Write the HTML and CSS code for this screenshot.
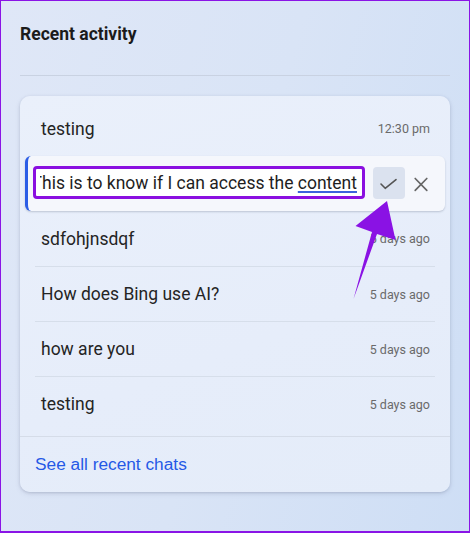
FILE: index.html
```html
<!DOCTYPE html>
<html lang="en">
<head>
<meta charset="utf-8">
<title>Recent activity</title>
<link rel="stylesheet" href="styles.css">
</head>
<body>
<div class="frame">
  <h2 class="title">Recent activity</h2>
  <div class="rule"></div>
  <section class="card">
    <ul class="list">
      <li class="row">
        <span class="name">testing</span>
        <span class="time">12:30 pm</span>
      </li>
      <li class="edit-row">
        <div class="input">
          <div class="clip"><span class="value">This is to know if I can access the <span class="spell">content</span></span></div>
        </div>
        <button class="icon-btn ok" aria-label="Confirm">
          <svg width="32" height="32" viewBox="0 0 32 32"><path d="M8 17 L12.2 21.3 L23 12.6" fill="none" stroke="#555" stroke-width="1.6" stroke-linecap="round" stroke-linejoin="round"/></svg>
        </button>
        <button class="icon-btn" aria-label="Cancel">
          <svg width="32" height="32" viewBox="0 0 32 32"><path d="M10.2 11.5 L21.8 23.3 M21.8 11.5 L10.2 23.3" fill="none" stroke="#666" stroke-width="1.7" stroke-linecap="round"/></svg>
        </button>
      </li>
      <li class="row">
        <span class="name">sdfohjnsdqf</span>
        <span class="time">5 days ago</span>
      </li>
      <li class="row sep">
        <span class="name">How does Bing use AI?</span>
        <span class="time">5 days ago</span>
      </li>
      <li class="row sep">
        <span class="name">how are you</span>
        <span class="time">5 days ago</span>
      </li>
      <li class="row sep">
        <span class="name">testing</span>
        <span class="time">5 days ago</span>
      </li>
    </ul>
    <div class="footer">
      <a class="see-all" href="#">See all recent chats</a>
    </div>
  </section>
  <svg class="arrow" width="470" height="533" viewBox="0 0 470 533">
    <polygon points="387,201 395.5,240 377,234 353.5,299 372,232 355.5,226" fill="#8a12e4"/>
  </svg>
</div>
</body>
</html>
```

FILE: styles.css
```css
* { box-sizing: border-box; }

html, body {
  margin: 0;
  padding: 0;
}

body {
  font-family: Roboto, "Liberation Sans", sans-serif;
  color: #222;
}

.frame {
  position: relative;
  width: 470px;
  height: 533px;
  border: 1px solid #8a14e6;
  border-bottom-width: 2px;
  padding: 22px 19px 0;
  background: linear-gradient(105deg, #dfe7f7 0%, #d9e4f6 50%, #cedef5 100%);
  overflow: hidden;
}

.title {
  margin: 0;
  font-size: 17.5px;
  line-height: 22px;
  font-weight: 700;
  color: #1b1b1b;
}

.rule {
  height: 1px;
  margin-top: 30px;
  background: #c9d2e2;
}

.card {
  margin-top: 20px;
  border-radius: 10px;
  background: linear-gradient(160deg, #eaf0fb 0%, #e6edfa 60%, #e4ecf9 100%);
  box-shadow: 0 1px 3px rgba(60, 70, 100, 0.22), 0 2px 6px rgba(60, 70, 100, 0.08);
}

.list {
  list-style: none;
  margin: 0;
  padding: 5px 0;
}

.row {
  height: 55px;
  margin: 0 15px;
  padding: 0 5px 0 6px;
  display: flex;
  align-items: center;
  justify-content: space-between;
}

.row.sep {
  border-top: 1px solid #d6deea;
}

.name {
  font-size: 17.5px;
  color: #242424;
}

.time {
  font-size: 12.5px;
  color: #6a6a6a;
}

.edit-row {
  height: 55px;
  margin: 0 5px;
  padding: 0 8px 2px 5px;
  display: flex;
  align-items: center;
  border-left: 3px solid #2b5de6;
  border-radius: 6px;
  background: #f5f7fc;
  box-shadow: 0 1px 2px rgba(60, 70, 100, 0.25);
}

.input {
  flex: none;
  width: 332px;
  height: 33px;
  border: 3px solid #8a0fe0;
  border-radius: 4px;
  background: #fff;
  padding: 0 5px 0 4px;
  display: flex;
  align-items: center;
}

.clip {
  flex: 1;
  overflow: hidden;
  display: flex;
  justify-content: flex-end;
  white-space: nowrap;
}

.value {
  font-size: 17.5px;
  line-height: 22px;
  color: #1e1e1e;
}

.spell {
  text-decoration: underline;
  text-decoration-color: #3b62dc;
  text-decoration-thickness: 1.5px;
  text-underline-offset: 2px;
}

.icon-btn {
  flex: none;
  width: 32px;
  height: 32px;
  padding: 0;
  border: 0;
  border-radius: 4px;
  background: transparent;
  display: flex;
  align-items: center;
  justify-content: center;
}

.icon-btn.ok {
  margin-left: 8px;
  background: #dbe2ef;
}

.footer {
  height: 56px;
  border-top: 1px solid #d5dce8;
  padding: 0 15px;
  display: flex;
  align-items: center;
}

.see-all {
  font-family: "Liberation Sans", Arial, sans-serif;
  font-size: 17.3px;
  color: #2559e6;
  text-decoration: none;
}

.arrow {
  position: absolute;
  left: -1px;
  top: -1px;
  pointer-events: none;
}
```
